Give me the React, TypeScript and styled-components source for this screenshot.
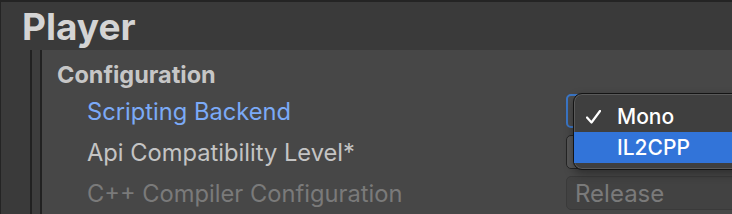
import React from 'react'
import styled, { createGlobalStyle } from 'styled-components'

const GlobalStyle = createGlobalStyle`
  html, body {
    margin: 0;
    padding: 0;
    background: #242424;
  }
  body {
    font-family: Inter, "Liberation Sans", "DejaVu Sans", sans-serif;
    -webkit-font-smoothing: antialiased;
  }
`

const Window = styled.div`
  width: 732px;
  height: 214px;
  box-sizing: border-box;
  padding: 2px 0 0 1px;
  background: #242424;
  display: flex;
  flex-direction: column;
  overflow: hidden;
`

const Header = styled.div`
  flex: none;
  height: 48px;
  display: flex;
  align-items: center;
  padding-left: 21px;
  background: #3a3a3a;
  color: #d4d4d4;
  font-size: 37px;
  font-weight: 700;
`

const Body = styled.div`
  flex: 1;
  display: flex;
  min-height: 0;
`

const Stripe = styled.div<{ width: number; tone: string }>`
  flex: none;
  width: ${(p) => p.width}px;
  background: ${(p) => p.tone};
`

const Panel = styled.div`
  flex: 1;
  min-width: 0;
  background: #474747;
  padding: 11px 0 0 15px;
`

const SectionTitle = styled.div`
  height: 28px;
  line-height: 28px;
  font-size: 23.5px;
  font-weight: 700;
  color: #c6c6c6;
`

const Rows = styled.div`
  margin-top: 5px;
  padding-left: 30px;
  display: grid;
  row-gap: 7px;
`

const Row = styled.div`
  display: grid;
  grid-template-columns: 479px 1fr;
  align-items: center;
  height: 34px;
`

const Label = styled.div<{ tone: 'focus' | 'normal' | 'disabled' }>`
  font-size: 23.7px;
  white-space: nowrap;
  color: ${(p) =>
    p.tone === 'focus' ? '#7baaf7' : p.tone === 'disabled' ? '#7a7a7a' : '#c4c4c4'};
`

const Field = styled.div<{ state: 'focus' | 'normal' | 'disabled' }>`
  position: relative;
  box-sizing: border-box;
  height: 34px;
  width: calc(100% + 14px);
  display: flex;
  align-items: center;
  padding-left: 8px;
  border-radius: 5px;
  font-size: 24px;
  color: #7a7a7a;
  border: ${(p) => (p.state === 'focus' ? '2px solid #3b76c6' : p.state === 'disabled' ? '1px solid #3a3a3a' : '1px solid #252525')};
  background: ${(p) => (p.state === 'focus' ? '#4c4c4c' : p.state === 'disabled' ? '#424242' : '#575757')};
`

const Popup = styled.div`
  position: absolute;
  top: -3px;
  left: 5px;
  width: 200px;
  box-sizing: border-box;
  padding: 7px 0 6px;
  background: #3f3f3f;
  border: 1px solid #141414;
  border-radius: 9px;
  box-shadow: inset 0 0 0 1px #5a5a5a, 0 4px 10px rgba(0, 0, 0, 0.35);
  z-index: 2;
`

const MenuItem = styled.div<{ active?: boolean }>`
  height: 31px;
  display: flex;
  align-items: center;
  padding-left: 12px;
  gap: 16px;
  font-size: 21px;
  font-weight: 500;
  color: #ffffff;
  background: ${(p) => (p.active ? '#3274d9' : 'transparent')};
`

const CheckSlot = styled.span`
  width: 15px;
  height: 16px;
  display: flex;
  align-items: center;
`

const Check = () => (
  <svg width="15" height="14" viewBox="0 0 15 14" fill="none">
    <polyline points="1,7.5 5.5,12.5 14,1" stroke="#ffffff" strokeWidth="2.2" strokeLinecap="round" strokeLinejoin="round" />
  </svg>
)

export default function App() {
  return (
    <>
      <GlobalStyle />
      <Window>
        <Header>Player</Header>
        <Body>
          <Stripe width={29} tone="#3a3a3a" />
          <Stripe width={2} tone="#212121" />
          <Stripe width={8} tone="#3d3d3d" />
          <Stripe width={2} tone="#212121" />
          <Panel>
            <SectionTitle>Configuration</SectionTitle>
            <Rows>
              <Row>
                <Label tone="focus">Scripting Backend</Label>
                <Field state="focus">
                  <Popup>
                    <MenuItem>
                      <CheckSlot><Check /></CheckSlot>
                      Mono
                    </MenuItem>
                    <MenuItem active>
                      <CheckSlot />
                      IL2CPP
                    </MenuItem>
                  </Popup>
                </Field>
              </Row>
              <Row>
                <Label tone="normal">Api Compatibility Level*</Label>
                <Field state="normal" />
              </Row>
              <Row>
                <Label tone="disabled">C++ Compiler Configuration</Label>
                <Field state="disabled">Release</Field>
              </Row>
            </Rows>
          </Panel>
        </Body>
      </Window>
    </>
  )
}
